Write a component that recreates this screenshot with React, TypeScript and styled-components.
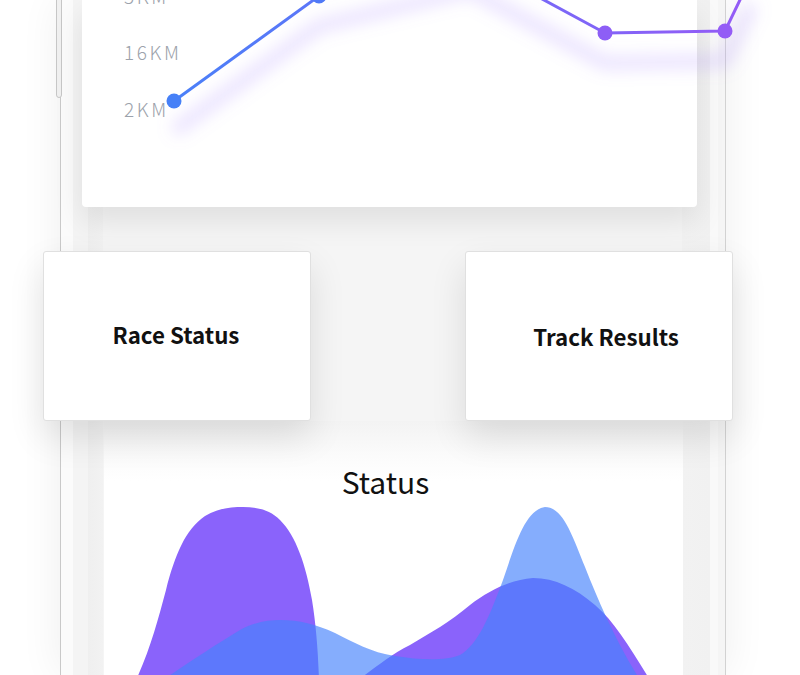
import React from "react";
import styled, { createGlobalStyle } from "styled-components";

const Global = createGlobalStyle`
  html, body { margin: 0; padding: 0; background: #ffffff; overflow: hidden; }
  * { box-sizing: border-box; }
`;

const Page = styled.div`
  width: 800px;
  height: 675px;
  overflow: hidden;
  display: flex;
  padding-left: 60px;
  background: #ffffff;
  font-family: "Noto Sans CJK SC", "Noto Sans", sans-serif;
`;

const Phone = styled.div`
  position: relative;
  width: 666px;
  height: 675px;
  border-left: 1px solid #c9c9c9;
  border-right: 1px solid #d2d2d2;
  display: flex;
  flex-direction: column;
  box-shadow: 0 0 40px rgba(0, 0, 0, 0.07);
  background: linear-gradient(
    to right,
    #fbfbfb 0px,
    #fbfbfb 12px,
    #f4f4f4 12px,
    #f4f4f4 27px,
    #efefef 27px,
    #f2f2f2 42px,
    #f5f5f5 42px,
    #f5f5f5 621px,
    #f2f2f2 621px,
    #f1f1f1 649px,
    #f9f9f9 649px,
    #f9f9f9 657px,
    #f5f5f5 657px
  );
`;

const SideButton = styled.div`
  position: absolute;
  left: -5px;
  top: -10px;
  width: 6px;
  height: 108px;
  border: 1px solid #c6c6c6;
  border-radius: 0 0 3px 3px;
  background: #f0f0f0;
`;

const ChartCard = styled.div`
  margin-left: 21px;
  width: 615px;
  height: 207px;
  flex: none;
  background: #ffffff;
  border-radius: 0 0 4px 4px;
  box-shadow: 0 14px 30px rgba(0, 0, 0, 0.09);
  position: relative;
  z-index: 1;
`;

const ChartSvg = styled.svg`
  display: block;
  overflow: visible;
`;

const AxisLabel = styled.text`
  font-family: "Noto Sans CJK SC", "Noto Sans", sans-serif;
  font-size: 19px;
  font-weight: 300;
  letter-spacing: 2.6px;
  fill: #9ca2ab;
`;

const CardRow = styled.div`
  margin-top: 44px;
  margin-left: -18px;
  width: 690px;
  height: 170px;
  flex: none;
  display: flex;
  justify-content: space-between;
  position: relative;
  z-index: 2;
`;

const NavCard = styled.div<{ $dx: number; $dy: number }>`
  width: 268px;
  height: 170px;
  background: #ffffff;
  border: 1px solid #e0e0e0;
  border-radius: 3px;
  box-shadow: 0 16px 36px rgba(0, 0, 0, 0.11);
  display: flex;
  align-items: center;
  justify-content: center;
  padding-left: ${(p) => Math.max(p.$dx, 0)}px;
  padding-right: ${(p) => Math.max(-p.$dx, 0)}px;
  padding-bottom: ${(p) => Math.max(-p.$dy, 0)}px;
  padding-top: ${(p) => Math.max(p.$dy, 0)}px;
`;

const NavLabel = styled.span`
  font-family: "Noto Sans CJK SC", "Noto Sans", sans-serif;
  font-size: 22.3px;
  font-weight: 700;
  color: #111111;
`;

const StatusPanel = styled.div`
  margin-left: 43px;
  width: 579px;
  flex: 1;
  display: flex;
  flex-direction: column;
  align-items: center;
  background: linear-gradient(#f3f3f3 0px, #fbfbfb 35px, #ffffff 60px);
`;

const StatusTitle = styled.h2`
  margin: 42px 0 0 0;
  font-family: "Noto Sans CJK SC", "Noto Sans", sans-serif;
  font-size: 30px;
  line-height: 36px;
  font-weight: 400;
  color: #111111;
  transform: translateX(-8px);
`;

const AreaSvg = styled.svg`
  display: block;
  flex: none;
  margin-top: 2px;
`;

const LineChart = () => (
  <ChartSvg width={615} height={207} viewBox="82 0 615 207">
    <defs>
      <linearGradient id="lineGrad" gradientUnits="userSpaceOnUse" x1="174" y1="0" x2="740" y2="0">
        <stop offset="0" stopColor="#4a80f8" />
        <stop offset="0.45" stopColor="#6a6ef8" />
        <stop offset="1" stopColor="#945cf6" />
      </linearGradient>
      <filter id="blurShadow" x="-20%" y="-80%" width="140%" height="260%">
        <feGaussianBlur stdDeviation="8" />
      </filter>
    </defs>
    <AxisLabel x={124} y={4}>5KM</AxisLabel>
    <AxisLabel x={124} y={60}>16KM</AxisLabel>
    <AxisLabel x={124} y={117}>2KM</AxisLabel>
    <polyline
      points="174,131 319,26 470,-10 605,63 725,61 752,5"
      fill="none"
      stroke="#a98bfa"
      strokeOpacity={0.24}
      strokeWidth={14}
      strokeLinejoin="round"
      filter="url(#blurShadow)"
    />
    <polyline
      points="174,101 319,-4 470,-40 605,33 725,31 752,-25"
      fill="none"
      stroke="url(#lineGrad)"
      strokeWidth={3}
      strokeLinejoin="round"
    />
    <circle cx={174} cy={101} r={7.5} fill="#4680f7" />
    <circle cx={319} cy={-4} r={7.5} fill="#5079f7" />
    <circle cx={605} cy={33} r={7.5} fill="#8d5ef6" />
    <circle cx={725} cy={31} r={7.5} fill="#945cf6" />
  </ChartSvg>
);

const AreaChart = () => (
  <AreaSvg width={579} height={174} viewBox="104 501 579 174">
    <path
      d="M136 680 C 150 650, 158 620, 166 590 C 175 555, 185 530, 205 516 C 218 508, 232 507, 243 507 C 258 507, 270 510, 280 520 C 296 536, 306 565, 312 600 C 316 625, 318 650, 319 680 Z"
      fill="#8a63fb"
    />
    <path
      d="M358 680 C 375 668, 390 655, 410 645 C 430 633, 450 622, 470 605 C 490 590, 510 580, 533 578 C 555 578, 575 588, 595 605 C 615 622, 630 648, 650 680 Z"
      fill="#8a63fb"
    />
    <path
      d="M163 680 C 185 665, 215 645, 240 630 C 255 622, 268 620, 280 620 C 300 620, 315 624, 335 633 C 355 643, 370 652, 395 656 C 420 660, 445 661, 460 655 C 478 645, 490 615, 503 580 C 515 545, 525 510, 545 507 C 563 507, 572 535, 585 567 C 598 600, 615 640, 640 680 Z"
      fill="#4682fc"
      fillOpacity={0.66}
    />
  </AreaSvg>
);

export default function App() {
  return (
    <>
      <Global />
      <Page>
        <Phone>
          <SideButton />
          <ChartCard>
            <LineChart />
          </ChartCard>
          <CardRow>
            <NavCard $dx={-2} $dy={-5}>
              <NavLabel>Race Status</NavLabel>
            </NavCard>
            <NavCard $dx={14} $dy={0}>
              <NavLabel>Track Results</NavLabel>
            </NavCard>
          </CardRow>
          <StatusPanel>
            <StatusTitle>Status</StatusTitle>
            <AreaChart />
          </StatusPanel>
        </Phone>
      </Page>
    </>
  );
}
